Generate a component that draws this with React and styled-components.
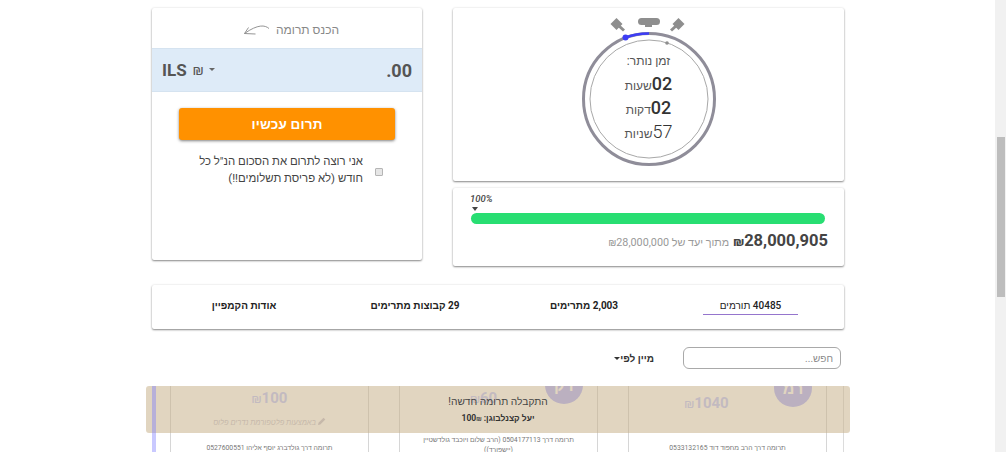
import React from 'react';
import styled, { createGlobalStyle } from 'styled-components';

const GlobalStyle = createGlobalStyle`
  html, body {
    margin: 0;
    padding: 0;
    height: 452px;
    overflow: hidden;
    background: #fff;
    font-family: Roboto, "Liberation Sans", "Noto Sans", sans-serif;
  }
  * {
    box-sizing: border-box;
  }
`;

const Page = styled.div`
  position: relative;
  width: 1006px;
  height: 452px;
  overflow: hidden;
  direction: rtl;
`;

const ScrollTrack = styled.div`
  position: absolute;
  top: 0;
  right: 0;
  width: 11px;
  height: 452px;
  background: #f1f1f1;
`;

const ScrollThumb = styled.div`
  position: absolute;
  top: 137px;
  right: 1px;
  width: 8px;
  height: 160px;
  background: #bdbdbd;
`;

const Content = styled.div`
  width: 692px;
  margin-right: 162px;
  padding-top: 8px;
`;

const TopRow = styled.div`
  display: flex;
  gap: 31px;
  align-items: stretch;
`;

const Card = styled.div`
  background: #fff;
  border-radius: 2px;
  box-shadow: 0 1px 2px rgba(0, 0, 0, 0.45), 0 0 3px rgba(0, 0, 0, 0.08);
`;

const LeftColumn = styled.div`
  width: 391px;
  display: flex;
  flex-direction: column;
  gap: 7px;
`;

const TimerCard = styled(Card)`
  height: 173px;
  display: flex;
  justify-content: center;
  padding-top: 8px;
`;

const Stopwatch = styled.div`
  position: relative;
  width: 140px;
  height: 158px;
`;

const Dial = styled.svg`
  position: absolute;
  top: 0;
  left: 0;
`;

const TimerText = styled.div`
  position: absolute;
  top: 38px;
  left: 0;
  width: 140px;
  display: flex;
  flex-direction: column;
  align-items: center;
  color: #555;
`;

const TimerTitle = styled.div`
  font-size: 12px;
  line-height: 14px;
  margin-bottom: 4px;
`;

const TimerLine = styled.div`
  display: flex;
  align-items: baseline;
  justify-content: center;
  height: 24px;
  line-height: 24px;
  font-size: 12px;
  color: #555;
`;

const TimerValue = styled.span`
  font-size: 18px;
  font-weight: ${(p) => (p.$light ? 300 : 500)};
  color: #333;
`;

const GoalCard = styled(Card)`
  height: 78px;
  padding: 5px 19px 0 18px;
  direction: ltr;
`;

const PercentLabel = styled.div`
  font-size: 9.5px;
  line-height: 12px;
  font-style: italic;
  font-weight: 500;
  color: #444;
  margin-left: -1px;
`;

const PercentArrow = styled.div`
  width: 0;
  height: 0;
  margin: 2px 0 2px 1px;
  border-left: 3px solid transparent;
  border-right: 3px solid transparent;
  border-top: 4px solid #444;
`;

const Bar = styled.div`
  height: 11px;
  border-radius: 6px;
  background: #28de72;
`;

const GoalLine = styled.div`
  display: flex;
  align-items: baseline;
  gap: 4px;
  margin-top: 7px;
  margin-right: -3px;
  direction: rtl;
`;

const GoalTotal = styled.span`
  font-size: 16.5px;
  font-weight: 700;
  color: #444;
`;

const GoalOf = styled.span`
  font-size: 10.8px;
  color: #999;
`;

const Shekel = styled.span`
  font-size: ${(p) => p.$size}px;
  font-weight: ${(p) => p.$weight || 400};
`;

const DonateCard = styled(Card)`
  width: 270px;
  height: 252px;
  display: flex;
  flex-direction: column;
`;

const DonateTitle = styled.div`
  height: 40px;
  display: flex;
  justify-content: center;
  align-items: center;
  gap: 6px;
  padding: 4px 0 0 9px;
  font-size: 12px;
  color: #888;
`;

const AmountRow = styled.div`
  height: 44px;
  background: #deebf8;
  border-top: 1px solid #d5e3f0;
  border-bottom: 1px solid #d5e3f0;
  display: flex;
  justify-content: space-between;
  align-items: center;
  padding: 0 10px;
  color: #555;
  font-weight: 700;
  font-size: 17px;
`;

const Amount = styled.span`
  font-size: 18px;
  direction: ltr;
`;

const Currency = styled.span`
  display: flex;
  align-items: center;
  gap: 6px;
  direction: ltr;
`;

const Caret = styled.span`
  width: 0;
  height: 0;
  border-left: 3px solid transparent;
  border-right: 3px solid transparent;
  border-top: 3px solid #666;
  margin-bottom: 2px;
`;

const DonateButton = styled.button`
  display: block;
  width: 216px;
  height: 32px;
  margin: 16px auto 0;
  border: none;
  border-radius: 3px;
  background: #ff9100;
  color: #fff;
  font-family: inherit;
  font-size: 13.5px;
  font-weight: 700;
  letter-spacing: 0.2px;
  box-shadow: 0 1px 3px rgba(0, 0, 0, 0.5);
`;

const MonthlyRow = styled.label`
  display: flex;
  align-items: center;
  margin-top: 13px;
  padding-right: 39px;
  font-size: 11.4px;
  line-height: 17px;
  color: #444;
`;

const Check = styled.input`
  appearance: none;
  width: 8px;
  height: 8px;
  margin: 4px 0 0 12px;
  flex: none;
  background: #e6e6e6;
  border: 1px solid #b5b5b5;
  border-radius: 1px;
`;

const MonthlyText = styled.span`
  width: 170px;
`;

const TabsCard = styled(Card)`
  height: 44px;
  margin-top: 19px;
  padding: 12px 46px 0 52px;
  display: flex;
  justify-content: space-between;
  align-items: flex-start;
  font-size: 10px;
  color: #222;
`;

const Tab = styled.div`
  width: ${(p) => p.$width}px;
  height: 18px;
  line-height: 17px;
  text-align: center;
  border-bottom: 1px solid ${(p) => (p.$active ? '#9575cd' : 'transparent')};
  font-weight: ${(p) => (p.$active ? 500 : 700)};
`;

const FilterRow = styled.div`
  display: flex;
  align-items: center;
  gap: 29px;
  margin-top: 18px;
  padding-right: 3px;
`;

const SearchInput = styled.input`
  width: 158px;
  height: 22px;
  border: 1px solid #a9a9a9;
  border-radius: 6px;
  padding: 0 7px;
  direction: rtl;
  font-family: inherit;
  font-size: 10px;
  color: #333;
  background: #fff;
  &::placeholder {
    color: #8b8b8b;
  }
`;

const SortLabel = styled.div`
  display: flex;
  align-items: center;
  font-size: 10px;
  font-weight: 700;
  color: #333;
`;

const SortCaret = styled.span`
  width: 0;
  height: 0;
  border-left: 3px solid transparent;
  border-right: 3px solid transparent;
  border-top: 3px solid #333;
`;

const DonorGrid = styled.div`
  display: flex;
  gap: 30px;
  height: 66px;
  margin-top: 17px;
  padding-right: 16px;
  border-right: 1px solid #dcdcdc;
  overflow: hidden;
`;

const DonorCard = styled.div`
  position: relative;
  width: 199px;
  flex: none;
  height: 100px;
  border-left: 1px solid #d6d6d6;
  border-right: 1px solid #d6d6d6;
  display: flex;
  flex-direction: column;
  align-items: center;
`;

const Avatar = styled.div`
  position: absolute;
  top: ${(p) => p.$top}px;
  left: 145px;
  width: 38px;
  height: 38px;
  border-radius: 50%;
  background: #aaaeff;
  color: #fff;
  font-size: 16px;
  font-weight: 700;
  display: flex;
  align-items: center;
  justify-content: center;
`;

const DonorSum = styled.div`
  margin-top: ${(p) => p.$top}px;
  margin-right: ${(p) => p.$shift || 0}px;
  font-size: 15px;
  line-height: 18px;
  font-weight: 700;
  color: #bbc3ff;
  direction: ltr;
`;

const DonorVia = styled.div`
  margin-top: 9px;
  font-size: 7.5px;
  line-height: 12px;
  font-style: italic;
  color: #c4bfcf;
`;

const DonorNote = styled.div`
  position: absolute;
  top: ${(p) => p.$top}px;
  left: 0;
  right: 0;
  padding: 0 20px;
  text-align: center;
  font-size: 6.8px;
  line-height: 10px;
  color: #777;
`;

const Toast = styled.div`
  position: absolute;
  top: 386px;
  left: 146px;
  width: 704px;
  height: 47px;
  border-radius: 3px;
  background: rgba(200, 178, 140, 0.55);
  display: flex;
  flex-direction: column;
  align-items: center;
  color: #444;
  padding-top: 9px;
`;

const ToastTitle = styled.div`
  font-size: 10.2px;
  line-height: 14px;
`;

const ToastName = styled.div`
  margin-top: 3px;
  font-size: 8.5px;
  line-height: 12px;
  font-weight: 700;
  color: #333;
`;

const SideStripe = styled.div`
  position: absolute;
  top: 386px;
  left: 152px;
  width: 4px;
  height: 66px;
  background: rgba(120, 120, 255, 0.4);
`;

function ArrowSwoosh() {
  return (
    <svg width="26" height="12" viewBox="0 0 26 12" fill="none" stroke="#888" strokeWidth="0.9">
      <path d="M25 4.5C21 1 14 0 .5 9.5" />
      <path d="M4.5 3.5L.5 9.5L11.5 10" />
    </svg>
  );
}

function PencilIcon() {
  return (
    <svg width="8" height="8" viewBox="0 0 8 8" fill="#c4bfcf">
      <path d="M0 8L.5 5.7 5.5.7 7.3 2.5 2.3 7.5Z" />
    </svg>
  );
}

function Timer() {
  return (
    <Stopwatch>
      <Dial width="140" height="158" viewBox="0 0 140 158" fill="none">
        <path d="M37.5 2L43.5 8 37.5 14 31.5 8Z" fill="#8e8e8e" />
        <path d="M40 10L45 14.5" stroke="#8e8e8e" strokeWidth="3" />
        <path d="M99.5 2L105.5 8 99.5 14 93.5 8Z" fill="#8e8e8e" />
        <path d="M97 10L92 14.5" stroke="#8e8e8e" strokeWidth="3" />
        <rect x="59" y="2" width="22" height="7" rx="3.5" fill="#8e8e8e" />
        <rect x="66" y="8" width="7" height="3" fill="#8e8e8e" />
        <circle cx="70" cy="83" r="65.5" stroke="#8f8d99" strokeWidth="3" />
        <circle cx="70" cy="83" r="59" stroke="#a8a8a8" strokeWidth="1" />
        <path d="M70 17.5A65.5 65.5 0 0 0 46.5 21.6" stroke="#3d3df5" strokeWidth="2.5" />
        <circle cx="46.5" cy="21.6" r="3" fill="#3d3df5" />
        <circle cx="88" cy="27" r="1.8" fill="#8e8e8e" />
      </Dial>
      <TimerText>
        <TimerTitle>זמן נותר:</TimerTitle>
        <TimerLine><TimerValue>02</TimerValue>שעות</TimerLine>
        <TimerLine><TimerValue>02</TimerValue>דקות</TimerLine>
        <TimerLine><TimerValue $light>57</TimerValue>שניות</TimerLine>
      </TimerText>
    </Stopwatch>
  );
}

export default function App() {
  return (
    <>
      <GlobalStyle />
      <Page>
        <Content>
          <TopRow>
            <LeftColumn>
              <TimerCard>
                <Timer />
              </TimerCard>
              <GoalCard>
                <PercentLabel>100%</PercentLabel>
                <PercentArrow />
                <Bar />
                <GoalLine>
                  <GoalTotal><Shekel $size={12.5} $weight={700}>₪</Shekel>28,000,905</GoalTotal>
                  <GoalOf>מתוך יעד של <Shekel $size={10}>₪</Shekel>28,000,000</GoalOf>
                </GoalLine>
              </GoalCard>
            </LeftColumn>
            <DonateCard>
              <DonateTitle>
                הכנס תרומה
                <ArrowSwoosh />
              </DonateTitle>
              <AmountRow>
                <Amount>.00</Amount>
                <Currency>
                  ILS <Shekel $size={14}>₪</Shekel> <Caret />
                </Currency>
              </AmountRow>
              <DonateButton>תרום עכשיו</DonateButton>
              <MonthlyRow>
                <Check type="checkbox" />
                <MonthlyText>אני רוצה לתרום את הסכום הנ"ל כל חודש (לא פריסת תשלומים!!)</MonthlyText>
              </MonthlyRow>
            </DonateCard>
          </TopRow>
          <TabsCard>
            <Tab $active $width={95}>40485 תורמים</Tab>
            <Tab $width={76}>2,003 מתרימים</Tab>
            <Tab $width={100}>29 קבוצות מתרימים</Tab>
            <Tab $width={80}>אודות הקמפיין</Tab>
          </TabsCard>
          <FilterRow>
            <SearchInput placeholder="חפש..." />
            <SortLabel>מיין לפי<SortCaret /></SortLabel>
          </FilterRow>
          <DonorGrid>
            <DonorCard>
              <Avatar $top={-17}>רמ</Avatar>
              <DonorSum $top={8} $shift={42}><Shekel $size={13}>₪</Shekel>1040</DonorSum>
              <DonorNote $top={57}>תרומה דרך הרב מחפוד דוד 0533132165</DonorNote>
            </DonorCard>
            <DonorCard>
              <Avatar $top={-20}>דק</Avatar>
              <DonorSum $top={3} $shift={30}><Shekel $size={13}>₪</Shekel>60</DonorSum>
              <DonorNote $top={49}>תרומה דרך 0504177113 (הרב שלום ויוכבד גולדשטיין (יישפורד))</DonorNote>
            </DonorCard>
            <DonorCard>
              <DonorSum $top={3}><Shekel $size={13}>₪</Shekel>100</DonorSum>
              <DonorVia><PencilIcon /> באמצעות פלטפורמת נדרים פלוס</DonorVia>
              <DonorNote $top={57}>תרומה דרך גולדברג יוסף אליהו 0527600551</DonorNote>
            </DonorCard>
          </DonorGrid>
        </Content>
        <Toast>
          <ToastTitle>התקבלה תרומה חדשה!</ToastTitle>
          <ToastName>יעל קצנלבוגן: 100<Shekel $size={7}>₪</Shekel></ToastName>
        </Toast>
        <SideStripe />
        <ScrollTrack>
          <ScrollThumb />
        </ScrollTrack>
      </Page>
    </>
  );
}
